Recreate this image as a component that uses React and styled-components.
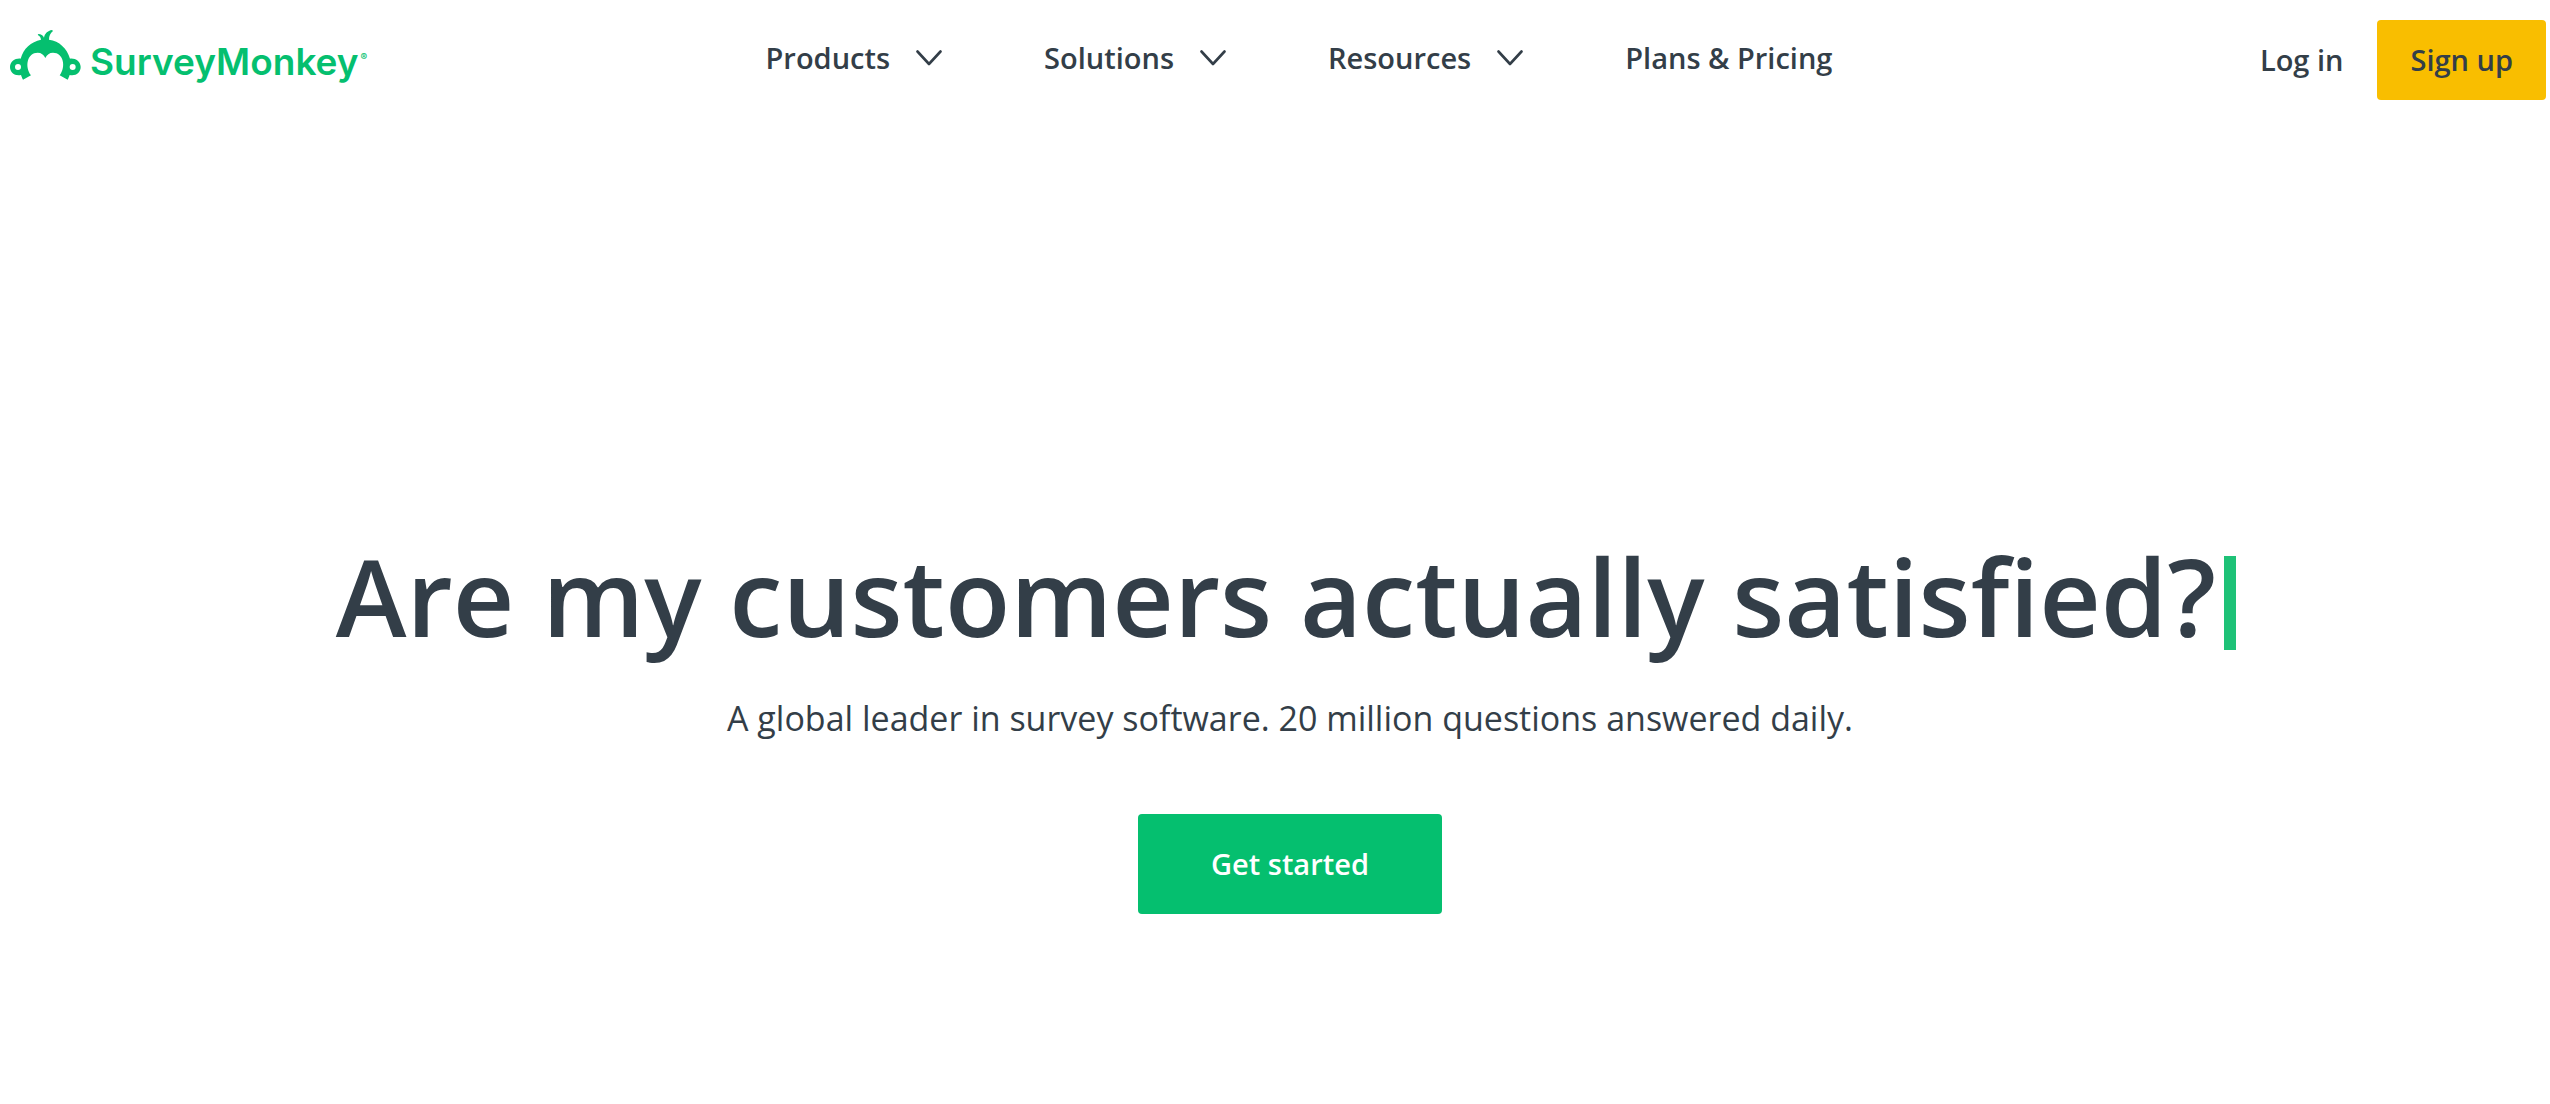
import React from 'react';
import styled, { createGlobalStyle } from 'styled-components';

const GlobalStyle = createGlobalStyle`
  * {
    margin: 0;
    padding: 0;
    box-sizing: border-box;
  }

  body {
    font-family: 'Open Sans', 'Noto Sans', sans-serif;
    background: #ffffff;
    color: #333e48;
  }
`;

const Page = styled.div`
  min-height: 100vh;
`;

const Header = styled.header`
  display: grid;
  grid-template-columns: 1fr auto 1fr;
  align-items: center;
  padding: 20px 4px 0 10px;
`;

const Logo = styled.a`
  display: flex;
  align-items: center;
  gap: 9px;
  justify-self: start;
  color: #05bf6f;
  text-decoration: none;
`;

const LogoMark = styled.svg`
  width: 71px;
  height: 52px;
  margin-bottom: 10px;
`;

const Wordmark = styled.span`
  padding-top: 4px;
  font-family: 'Inter', sans-serif;
  font-size: 37px;
  line-height: 48px;
  font-weight: 600;
`;

const Registered = styled.sup`
  margin-left: 2px;
  font-size: 10px;
  line-height: 10px;
  vertical-align: 14px;
`;

const Nav = styled.nav`
  display: flex;
  align-items: center;
  gap: 102px;
  padding: 0 0 4px 42px;
`;

const NavButton = styled.button`
  display: flex;
  align-items: center;
  gap: 26px;
  border: none;
  background: none;
  color: inherit;
  font: inherit;
  font-size: 29px;
  line-height: 40px;
  font-weight: 600;
  cursor: pointer;
`;

const NavLink = styled.a`
  color: inherit;
  font-size: 29px;
  line-height: 40px;
  font-weight: 600;
  text-decoration: none;
`;

const Chevron = styled.svg`
  width: 26px;
  height: 16px;
`;

const Account = styled.div`
  display: flex;
  align-items: center;
  justify-self: end;
  gap: 34px;
`;

const SignUp = styled.button`
  height: 80px;
  padding: 0 33px;
  border: none;
  border-radius: 4px;
  background: #f9be00;
  color: #333e48;
  font: inherit;
  font-size: 29px;
  line-height: 40px;
  font-weight: 600;
  cursor: pointer;
`;

const Hero = styled.main`
  display: flex;
  flex-direction: column;
  align-items: center;
  padding: 422px 0 0 30px;
`;

const Title = styled.h1`
  padding-right: 8px;
  font-size: 107px;
  line-height: 148px;
  font-weight: 600;
  white-space: nowrap;
`;

const Caret = styled.span`
  display: inline-block;
  width: 12px;
  height: 94px;
  margin-left: 8px;
  background: #1ec277;
  vertical-align: -13px;
`;

const Subtitle = styled.p`
  margin-top: 24px;
  font-size: 34px;
  line-height: 48px;
`;

const GetStarted = styled.button`
  height: 100px;
  margin-top: 72px;
  padding: 0 73px;
  border: none;
  border-radius: 4px;
  background: #05bf6f;
  color: #ffffff;
  font: inherit;
  font-size: 29px;
  line-height: 40px;
  font-weight: 600;
  cursor: pointer;
`;

const menus = ['Products', 'Solutions', 'Resources'];

const Monkey = () => (
  <LogoMark viewBox="30 42 213 156" fill="currentColor" aria-hidden="true">
    <path
      fillRule="evenodd"
      d="M156 45c-13 2-22 11-24 23-3-7-9-11-17-11l-2 3c6 2 9 7 10 14-30 6-53 27-61 57-16-2-32 9-32 25 0 17 15 28 33 24 2 5 3 9 6 14l24-13c-20-27-11-68 20-68 11 0 18 6 23 16 5-10 12-16 23-16 31 0 40 41 20 68l24 13c3-5 4-9 6-14 18 4 33-7 33-24 0-16-16-27-32-25-9-31-32-53-63-57 0-11 4-20 12-26zM54 147a9 9 0 1 0 0 18a9 9 0 1 0 0-18zM218 147a9 9 0 1 0 0 18a9 9 0 1 0 0-18z"
    />
  </LogoMark>
);

const App = () => (
  <>
    <GlobalStyle />
    <Page>
      <Header>
        <Logo href="#">
          <Monkey />
          <Wordmark>
            SurveyMonkey<Registered>®</Registered>
          </Wordmark>
        </Logo>

        <Nav>
          {menus.map((name) => (
            <NavButton key={name} type="button">
              {name}
              <Chevron viewBox="0 0 26 16" fill="none" stroke="currentColor" strokeWidth="2.6" strokeLinecap="round" strokeLinejoin="round">
                <path d="M1.5 1.5L13 14L24.5 1.5" />
              </Chevron>
            </NavButton>
          ))}
          <NavLink href="#">Plans &amp; Pricing</NavLink>
        </Nav>

        <Account>
          <NavLink href="#">Log in</NavLink>
          <SignUp type="button">Sign up</SignUp>
        </Account>
      </Header>

      <Hero>
        <Title>
          Are my customers actually satisfied?
          <Caret />
        </Title>
        <Subtitle>A global leader in survey software. 20 million questions answered daily.</Subtitle>
        <GetStarted type="button">Get started</GetStarted>
      </Hero>
    </Page>
  </>
);

export default App;
